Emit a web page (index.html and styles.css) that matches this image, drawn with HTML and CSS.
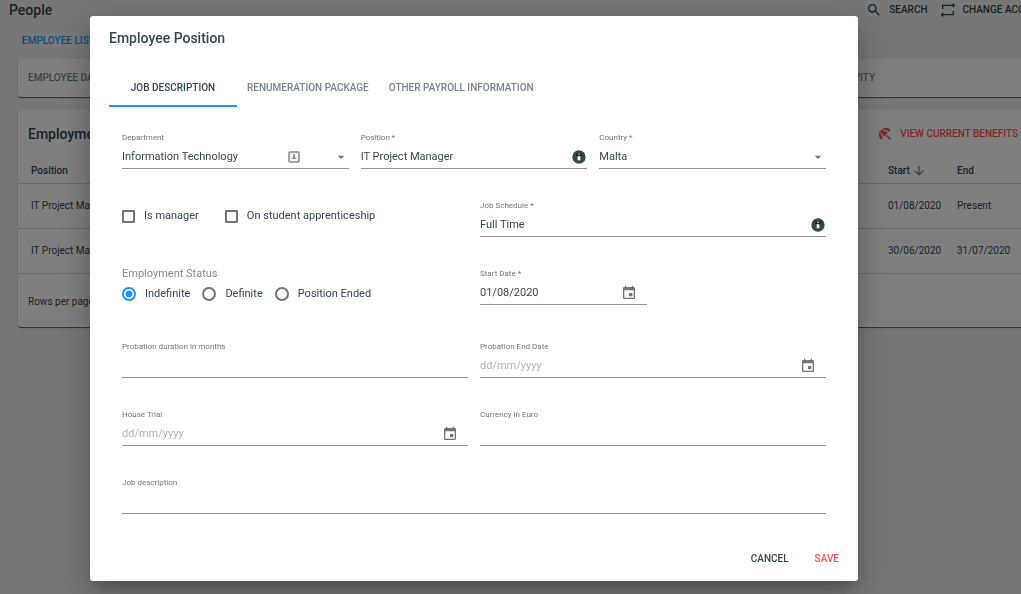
FILE: index.html
```
<!DOCTYPE html>
<html lang="en">
<head>
    <meta charset="UTF-8">
    <meta name="viewport" content="width=device-width, initial-scale=1.0">
    <title>Employee Position</title>
    <link rel="stylesheet" href="styles.css">
</head>
<body>
    <div class="page">
        <header class="topbar">
            <h1 class="heading">People</h1>
            <nav class="topbar-actions">
                <button class="text-button" type="button">
                    <svg class="icon" viewBox="0 0 24 24"><path d="M15.5 14h-.79l-.28-.27A6.47 6.47 0 0 0 16 9.5 6.5 6.5 0 1 0 9.5 16c1.61 0 3.09-.59 4.23-1.57l.27.28v.79l5 4.99L20.49 19l-4.99-5zm-6 0C7.01 14 5 11.99 5 9.5S7.01 5 9.5 5 14 7.01 14 9.5 11.99 14 9.5 14z"/></svg>
                    SEARCH
                </button>
                <button class="text-button" type="button">
                    <svg class="icon" viewBox="0 0 24 24"><path d="M19 1l4 4-4 4V6H5v5H3V4h16V1zM5 23l-4-4 4-4v3h14v-5h2v7H5v3z"/></svg>
                    CHANGE ACCOUNT
                </button>
            </nav>
        </header>
        <a class="list-link" href="#">EMPLOYEE LIST</a>
        <nav class="card section-tabs">
            <a href="#">EMPLOYEE DATA</a>
            <a href="#">ACTIVITY</a>
        </nav>
        <section class="card employment">
            <div class="card-header">
                <h2 class="heading">Employment</h2>
                <button class="text-button benefits" type="button">
                    <svg class="icon" viewBox="0 0 24 24"><path d="M13.13 14.56l1.43-1.43 6.44 6.44L19.57 21l-6.44-6.44zm4.29-5.73l2.86-2.86c-3.95-3.95-10.35-3.96-14.3-.02 3.93-1.3 8.31-.25 11.44 2.88zM5.95 5.98c-3.94 3.95-3.93 10.35.02 14.3l2.86-2.86C5.7 14.29 4.65 9.91 5.95 5.98zm.02-.02l-.01.01c-.38 3.01 1.17 6.88 4.3 10.02l5.73-5.73c-3.13-3.13-7.01-4.68-10.02-4.3z"/></svg>
                    VIEW CURRENT BENEFITS
                </button>
            </div>
            <table class="positions">
                <thead>
                    <tr>
                        <th>Position</th>
                        <th class="col-start">Start <svg class="sort" viewBox="0 0 24 24"><path d="M20 12l-1.41-1.41L13 16.17V4h-2v12.17l-5.58-5.59L4 12l8 8 8-8z"/></svg></th>
                        <th class="col-end">End</th>
                    </tr>
                </thead>
                <tbody>
                    <tr><td>IT Project Manager</td><td>01/08/2020</td><td>Present</td></tr>
                    <tr><td>IT Project Manager</td><td>30/06/2020</td><td>31/07/2020</td></tr>
                </tbody>
            </table>
            <div class="pager">Rows per page</div>
        </section>
    </div>

    <div class="overlay">
        <div class="dialog" role="dialog" aria-labelledby="dialog-title">
            <h2 class="heading" id="dialog-title">Employee Position</h2>
            <div class="tabs" role="tablist">
                <button class="tab active" type="button" role="tab">JOB DESCRIPTION</button>
                <button class="tab" type="button" role="tab">RENUMERATION PACKAGE</button>
                <button class="tab" type="button" role="tab">OTHER PAYROLL INFORMATION</button>
            </div>
            <form class="form">
                <div class="row three">
                    <div class="field">
                        <label for="department">Department</label>
                        <div class="control">
                            <select id="department"><option>Information Technology</option></select>
                            <svg class="contact" viewBox="0 0 12 12"><rect class="contact-frame" x="1" y="1" width="10" height="10" rx="1"/><circle cx="6" cy="4" r="1"/><path d="M5 5h2v2H5zM4 7h4v1H4z"/></svg>
                            <svg class="icon" viewBox="0 0 24 24"><path d="M7 10l5 5 5-5z"/></svg>
                        </div>
                    </div>
                    <div class="field">
                        <label for="position">Position *</label>
                        <div class="control">
                            <input id="position" type="text" value="IT Project Manager">
                            <svg class="icon info" viewBox="0 0 24 24"><circle cx="12" cy="12" r="10"/><path class="info-dot" d="M8 7h8v3H8z"/><path class="info-mark" d="M11 7h2v2h-2zM10 11h4v6h-4z"/></svg>
                        </div>
                    </div>
                    <div class="field">
                        <label for="country">Country *</label>
                        <div class="control">
                            <select id="country"><option>Malta</option></select>
                            <svg class="icon" viewBox="0 0 24 24"><path d="M7 10l5 5 5-5z"/></svg>
                        </div>
                    </div>
                </div>
                <div class="row two">
                    <div class="checks">
                        <label class="option"><input type="checkbox">Is manager</label>
                        <label class="option"><input type="checkbox">On student apprenticeship</label>
                    </div>
                    <div class="field">
                        <label for="schedule">Job Schedule *</label>
                        <div class="control">
                            <input id="schedule" type="text" value="Full Time">
                            <svg class="icon info" viewBox="0 0 24 24"><circle cx="12" cy="12" r="10"/><path class="info-dot" d="M8 7h8v3H8z"/><path class="info-mark" d="M11 7h2v2h-2zM10 11h4v6h-4z"/></svg>
                        </div>
                    </div>
                </div>
                <div class="row two">
                    <fieldset class="status">
                        <legend>Employment Status</legend>
                        <div class="radios">
                            <label class="option"><input type="radio" name="status" checked>Indefinite</label>
                            <label class="option"><input type="radio" name="status">Definite</label>
                            <label class="option"><input type="radio" name="status">Position Ended</label>
                        </div>
                    </fieldset>
                    <div class="row two">
                        <div class="field">
                            <label for="start">Start Date *</label>
                            <div class="control date">
                                <input id="start" type="text" value="01/08/2020">
                                <svg class="icon" viewBox="0 0 24 24"><path d="M17 12h-5v5h5v-5zM16 1v2H8V1H6v2H5c-1.11 0-1.99.9-1.99 2L3 19c0 1.1.89 2 2 2h14c1.1 0 2-.9 2-2V5c0-1.1-.9-2-2-2h-1V1h-2zm3 18H5V8h14v11z"/></svg>
                            </div>
                        </div>
                    </div>
                </div>
                <div class="row two">
                    <div class="field">
                        <label for="duration">Probation duration in months</label>
                        <div class="control"><input id="duration" type="text"></div>
                    </div>
                    <div class="field">
                        <label for="probation-end">Probation End Date</label>
                        <div class="control date">
                            <input id="probation-end" type="text" placeholder="dd/mm/yyyy">
                            <svg class="icon" viewBox="0 0 24 24"><path d="M17 12h-5v5h5v-5zM16 1v2H8V1H6v2H5c-1.11 0-1.99.9-1.99 2L3 19c0 1.1.89 2 2 2h14c1.1 0 2-.9 2-2V5c0-1.1-.9-2-2-2h-1V1h-2zm3 18H5V8h14v11z"/></svg>
                        </div>
                    </div>
                </div>
                <div class="row two">
                    <div class="field">
                        <label for="trial">House Trial</label>
                        <div class="control date">
                            <input id="trial" type="text" placeholder="dd/mm/yyyy">
                            <svg class="icon" viewBox="0 0 24 24"><path d="M17 12h-5v5h5v-5zM16 1v2H8V1H6v2H5c-1.11 0-1.99.9-1.99 2L3 19c0 1.1.89 2 2 2h14c1.1 0 2-.9 2-2V5c0-1.1-.9-2-2-2h-1V1h-2zm3 18H5V8h14v11z"/></svg>
                        </div>
                    </div>
                    <div class="field">
                        <label for="currency">Currency in Euro</label>
                        <div class="control"><input id="currency" type="text"></div>
                    </div>
                </div>
                <div class="field">
                    <label for="description">Job description</label>
                    <div class="control"><input id="description" type="text"></div>
                </div>
            </form>
            <div class="actions">
                <button class="text-button" type="button">CANCEL</button>
                <button class="text-button save" type="button">SAVE</button>
            </div>
        </div>
    </div>
</body>
</html>
```
FILE: styles.css
```
* {
    box-sizing: border-box;
}
body {
    margin: 0;
    min-height: 100vh;
    overflow: hidden;
    font-family: Roboto, sans-serif;
    font-size: 11px;
    color: #37474f;
    background-color: #eeeeee;
}
button, input, select {
    font-family: inherit;
    color: inherit;
}
.heading {
    margin: 0;
    font-size: 14px;
    line-height: 20px;
    font-weight: 500;
}
.icon {
    flex: none;
    width: 16px;
    height: 16px;
    fill: #757575;
}
.text-button {
    display: flex;
    align-items: center;
    gap: 7px;
    padding: 0;
    border: none;
    background: none;
    font-size: 10px;
    line-height: 20px;
    font-weight: 500;
    white-space: nowrap;
    cursor: pointer;
}
.text-button .icon {
    fill: currentColor;
}

/* page behind the dialog */
.page {
    margin-right: -32px;
    padding-left: 18px;
}
.topbar {
    display: flex;
    justify-content: space-between;
    margin-left: -9px;
    padding-right: 2px;
}
.topbar-actions {
    display: flex;
    gap: 12px;
}
.list-link {
    display: block;
    margin: 11px 4px 8px;
    color: #2196f3;
    font-size: 10px;
    line-height: 20px;
    font-weight: 500;
    text-decoration: none;
}
.card {
    background-color: #ffffff;
    border-radius: 3px;
    box-shadow: 0 1px 1px rgba(0, 0, 0, 0.6);
}
.section-tabs {
    display: flex;
    justify-content: space-between;
    padding: 9px 178px 9px 10px;
    margin-bottom: 13px;
}
.section-tabs a {
    color: #78868c;
    font-size: 10px;
    line-height: 20px;
    font-weight: 500;
    text-decoration: none;
}
.card-header {
    display: flex;
    justify-content: space-between;
    padding: 14px 35px 14px 10px;
}
.benefits {
    color: #ff5252;
}
.positions {
    width: 100%;
    table-layout: fixed;
    border-collapse: collapse;
    font-size: 10px;
}
.positions th {
    height: 25px;
    padding: 1px 0 0 13px;
    border-bottom: 1px solid #d6d6d6;
    font-weight: 500;
    text-align: left;
}
.positions td {
    height: 45px;
    padding: 0 0 0 13px;
    border-bottom: 1px solid #d6d6d6;
}
.positions .col-start {
    width: 69px;
}
.positions .col-end {
    width: 109px;
}
.positions .sort {
    width: 14px;
    height: 14px;
    fill: #757575;
    vertical-align: middle;
}
.pager {
    padding: 18px 10px 15px;
    font-size: 10px;
    line-height: 20px;
}

/* dialog */
.overlay {
    position: fixed;
    inset: 0;
    padding: 16px 163px 13px 90px;
    background-color: rgba(0, 0, 0, 0.5);
}
.dialog {
    padding: 12px 19px;
    background-color: #ffffff;
    border-radius: 3px;
    box-shadow: 0 8px 12px -5px rgba(0, 0, 0, 0.2), 0 18px 28px 2px rgba(0, 0, 0, 0.14), 0 7px 34px 6px rgba(0, 0, 0, 0.12);
}
.tabs {
    display: flex;
    margin-top: 20px;
}
.tab {
    height: 39px;
    padding: 2px 10px 0;
    border: none;
    border-bottom: 2px solid transparent;
    background: none;
    color: #78868c;
    font-size: 10px;
    font-weight: 500;
    cursor: pointer;
}
.tab.active {
    min-width: 128px;
    border-bottom-color: #2196f3;
    color: #37474f;
}
.form {
    display: flex;
    flex-direction: column;
    gap: 31px;
    padding: 25px 13px 35px;
}
.row {
    display: grid;
    gap: 12px;
}
.two {
    grid-template-columns: 1fr 1fr;
}
.three {
    grid-template-columns: 1fr 1fr 1fr;
}
.field label {
    display: block;
    color: #757575;
    font-size: 8px;
    line-height: 12px;
}
.control {
    display: flex;
    align-items: center;
    height: 25px;
    padding-top: 1px;
    border-bottom: 1px solid #949494;
}
.control.date {
    padding-right: 10px;
}
.control input, .control select {
    flex: 1;
    min-width: 0;
    height: 20px;
    padding: 0;
    border: none;
    outline: none;
    background: none;
    appearance: none;
    font-size: 11px;
}
.control input::placeholder {
    color: #b0b3b5;
}
.contact {
    width: 12px;
    height: 12px;
    margin-right: 33px;
    fill: #8a8a8a;
}
.contact-frame {
    fill: #eeeeee;
    stroke: #8a8a8a;
    stroke-width: 1.5;
}
.info {
    fill: #37474f;
}
.info-mark {
    fill: #ffffff;
}
.info-dot {
    fill: #11181c;
}
.checks, .radios {
    display: flex;
}
.checks {
    gap: 26px;
    align-items: center;
    padding-bottom: 5px;
}
.radios {
    gap: 12px;
    padding-top: 5px;
}
.option {
    display: flex;
    align-items: center;
    gap: 9px;
    line-height: 20px;
}
.option input {
    flex: none;
    width: 13px;
    height: 13px;
    margin: 0;
    border: 2px solid #757575;
    border-radius: 1px;
    appearance: none;
}
.option input[type="radio"] {
    width: 14px;
    height: 14px;
    border-radius: 50%;
}
.option input[type="radio"]:checked {
    border-color: #2196f3;
    background: radial-gradient(#2196f3 3px, transparent 4px);
}
.status {
    min-width: 0;
    height: 42px;
    margin: 0;
    padding: 0;
    border: none;
}
.status legend {
    padding: 0;
    color: #8a8a8a;
    line-height: 11px;
}
.actions {
    display: flex;
    justify-content: flex-end;
    gap: 26px;
}
.save {
    color: #ff5252;
}
```
